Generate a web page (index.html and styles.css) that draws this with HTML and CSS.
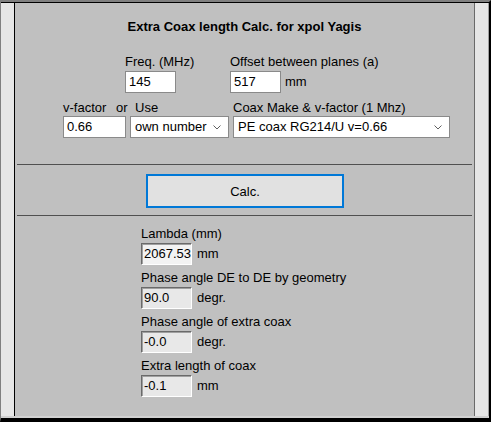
FILE: index.html
```html
<!DOCTYPE html>
<html>
<head>
<meta charset="utf-8">
<link rel="stylesheet" href="styles.css">
</head>
<body>
<div class="win">
  <div class="inner">
    <div class="strip strip-left"></div>
    <main class="panel">
      <h1 class="title">Extra Coax length Calc. for xpol Yagis</h1>

      <div class="row1 labels">
        <span class="lab-freq">Freq. (MHz)</span>
        <span>Offset between planes (a)</span>
      </div>
      <div class="row1 controls">
        <div class="input w51 gap-freq">145</div>
        <div class="input w51">517</div>
        <span class="unit">mm</span>
      </div>

      <div class="row2 labels">
        <span class="lab-vf">v-factor</span>
        <span class="lab-or">or</span>
        <span class="lab-use">Use</span>
        <span>Coax Make &amp; v-factor (1 Mhz)</span>
      </div>
      <div class="row2 controls">
        <div class="input w63">0.66</div>
        <div class="select w99">
          <span>own number</span>
          <svg class="chev" width="8" height="5" viewBox="0 0 8 5"><path d="M0.5 0.5 L4 4 L7.5 0.5" fill="none" stroke="#606060" stroke-width="1"/></svg>
        </div>
        <div class="select w217">
          <span>PE coax RG214/U v=0.66</span>
          <svg class="chev" width="8" height="5" viewBox="0 0 8 5"><path d="M0.5 0.5 L4 4 L7.5 0.5" fill="none" stroke="#606060" stroke-width="1"/></svg>
        </div>
      </div>

      <hr class="rule rule-top">
      <button class="calc">Calc.</button>
      <hr class="rule rule-bottom">

      <section class="results">
        <div class="res">
          <div class="res-label">Lambda (mm)</div>
          <div class="res-row"><div class="box box-light">2067.53</div><span class="unit">mm</span></div>
        </div>
        <div class="res">
          <div class="res-label">Phase angle DE to DE by geometry</div>
          <div class="res-row"><div class="box">90.0</div><span class="unit">degr.</span></div>
        </div>
        <div class="res">
          <div class="res-label">Phase angle of extra coax</div>
          <div class="res-row"><div class="box">-0.0</div><span class="unit">degr.</span></div>
        </div>
        <div class="res">
          <div class="res-label">Extra length of coax</div>
          <div class="res-row"><div class="box">-0.1</div><span class="unit">mm</span></div>
        </div>
      </section>
    </main>
    <div class="strip strip-right"></div>
  </div>
</div>
</body>
</html>
```

FILE: styles.css
```css
html, body {
  margin: 0;
  padding: 0;
  background: #000;
}

body {
  font-family: "Liberation Sans", Arial, sans-serif;
  font-size: 13px;
  line-height: 16px;
  color: #000;
}

.win {
  width: 491px;
  height: 422px;
  box-sizing: border-box;
  border-top: 2px solid #808080;
  border-left: 1px solid #808080;
  border-right: 2px solid #000;
  border-bottom: 4px solid #000;
}

.inner {
  display: flex;
  height: 100%;
  box-sizing: border-box;
  border-top: 1px solid #000;
  border-bottom: 2px solid #d0d0d0;
}

.strip {
  width: 13px;
  flex: none;
  background: #e6e6e6;
}

.strip-left {
  border-right: 1px solid #000;
}

.strip-right {
  border-left: 1px solid #6a6a6a;
  border-right: 1px solid #a0a0a0;
}

.panel {
  flex: 1;
  background: #c0c0c0;
  overflow: hidden;
}

.title {
  margin: 0;
  padding-top: 16px;
  font-size: 13px;
  line-height: 16px;
  font-weight: bold;
  text-align: center;
}

.labels {
  display: flex;
  white-space: nowrap;
}

.controls {
  display: flex;
  align-items: center;
}

.row1 {
  padding-left: 110px;
}

.row1.labels {
  margin-top: 19px;
}

.row1.controls {
  margin-top: 1px;
}

.lab-freq {
  width: 105px;
}

.gap-freq {
  margin-right: 54px;
}

.row2 {
  padding-left: 48px;
}

.row2.labels {
  margin-top: 7px;
}

.row2.controls {
  gap: 4px;
}

.lab-vf { width: 53px; }
.lab-or { width: 19px; }
.lab-use { width: 98px; }

.input {
  box-sizing: border-box;
  height: 22px;
  background: #fff;
  border: 1px solid #8a8a8a;
  padding: 0 3px;
  line-height: 20px;
}

.w51 { width: 51px; }
.w63 { width: 63px; }

.select {
  box-sizing: border-box;
  height: 22px;
  background: #fff;
  border: 1px solid #8a8a8a;
  display: flex;
  align-items: center;
  justify-content: space-between;
  padding: 0 7px 0 4px;
  line-height: 20px;
}

.w99 { width: 99px; }
.w217 { width: 217px; }

.chev {
  display: block;
}

.unit {
  margin-left: 4px;
}

.rule {
  margin: 0 2px;
  border: 0;
  height: 1px;
  background: #505050;
}

.rule-top {
  margin-top: 26px;
}

.calc {
  display: block;
  margin: 9px 0 0 131px;
  width: 198px;
  height: 34px;
  box-sizing: border-box;
  background: #e1e1e1;
  border: 2px solid #0078d7;
  font-family: inherit;
  font-size: 13px;
  color: #000;
  padding: 0;
}

.rule-bottom {
  margin-top: 7px;
}

.results {
  padding-left: 126px;
  padding-top: 10px;
  display: flex;
  flex-direction: column;
  gap: 5px;
}

.res-row {
  display: flex;
  align-items: center;
  margin-top: 1px;
}

.res-row .unit {
  margin-left: 5px;
}

.box {
  box-sizing: border-box;
  width: 51px;
  height: 22px;
  background: #e8e8e8;
  border: 1px solid;
  border-color: #6a6a6a #ffffff #ffffff #6a6a6a;
  box-shadow: inset 1px 1px 0 #a0a0a0;
  padding: 0 2px;
  line-height: 20px;
  white-space: nowrap;
}

.box-light {
  background: #f3f3f3;
}
```
